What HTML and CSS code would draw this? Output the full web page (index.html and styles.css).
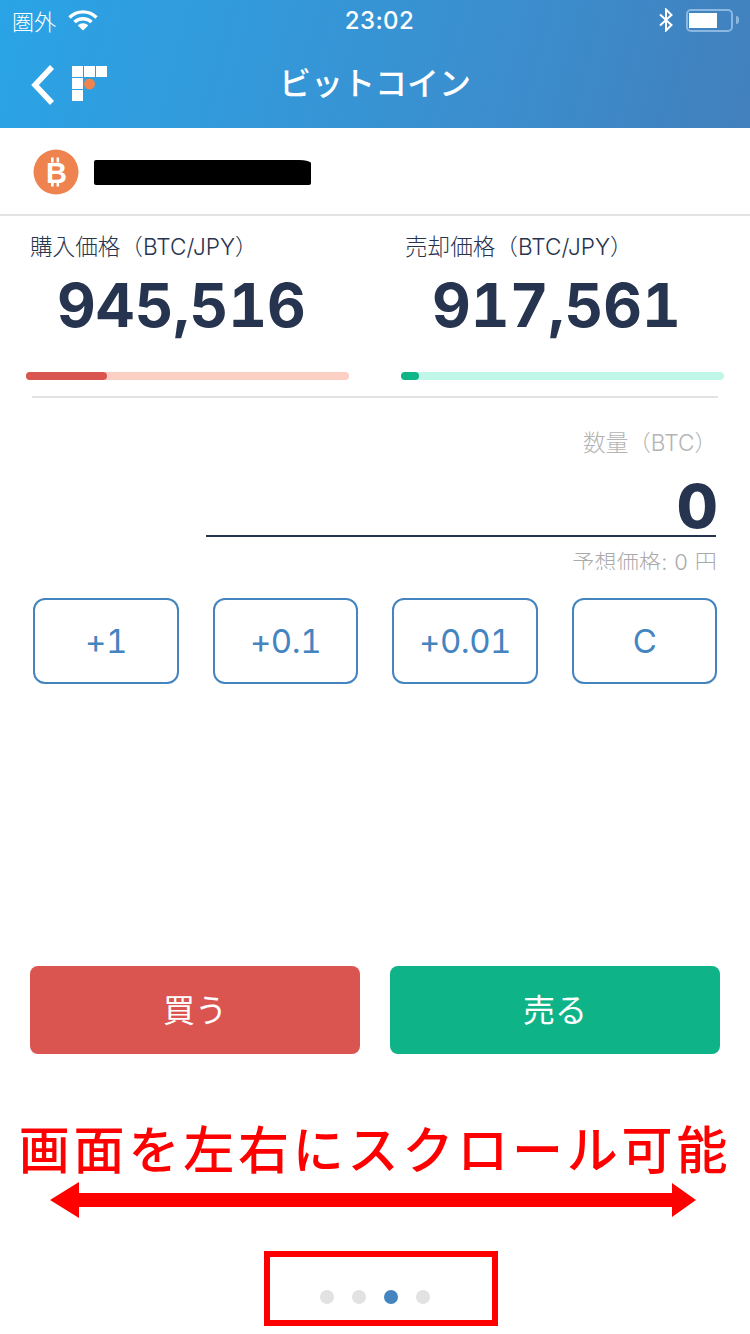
FILE: index.html
```html
<!DOCTYPE html>
<html lang="ja">
<head>
    <meta charset="UTF-8">
    <meta name="viewport" content="width=device-width, initial-scale=1.0">
    <title>ビットコイン</title>
    <link rel="stylesheet" href="styles.css">
</head>
<body>
    <header class="header">
        <div class="status">
            <div class="status_left">
                <span class="carrier">圏外</span>
                <svg class="wifi" width="30" height="22" viewBox="0 0 30 22">
                    <path d="M1.5 8.5C9 1 21 1 28.5 8.5" fill="none" stroke="#fff" stroke-width="3.4"/>
                    <path d="M6.5 13C11 8.6 19 8.6 23.5 13" fill="none" stroke="#fff" stroke-width="3.4"/>
                    <path d="M9.8 16.4C12.6 13.6 17.4 13.6 20.2 16.4L15 21.5Z" fill="#fff"/>
                </svg>
            </div>
            <span class="time">23:02</span>
            <div class="status_right">
                <svg class="bt" width="16" height="24" viewBox="0 0 16 24">
                    <path d="M2 6.5L13.5 17L8 22.5V1.5L13.5 7L2 17.5" fill="none" stroke="#fff" stroke-width="2"/>
                </svg>
                <div class="battery"><div class="battery_fill"></div></div>
                <div class="battery_tip"></div>
            </div>
        </div>
        <nav class="nav">
            <div class="nav_left">
                <svg width="26" height="42" viewBox="0 0 26 42">
                    <path d="M22 3L5 21L22 39" fill="none" stroke="#fff" stroke-width="5.5"/>
                </svg>
                <svg class="logo" width="36" height="36" viewBox="0 0 36 36">
                    <rect x="0" y="0" width="11" height="11" fill="#fff"/>
                    <rect x="12" y="0" width="11" height="11" fill="#fff"/>
                    <rect x="24" y="0" width="11" height="11" fill="#fff"/>
                    <rect x="0" y="12" width="11" height="11" fill="#fff"/>
                    <rect x="0" y="24" width="11" height="11" fill="#fff"/>
                    <circle cx="17.5" cy="18" r="5.5" fill="#ef8350"/>
                </svg>
            </div>
            <h1 class="title">ビットコイン</h1>
        </nav>
    </header>

    <section class="coin_row">
        <svg width="46" height="46" viewBox="0 0 46 46">
            <circle cx="23" cy="23" r="22.5" fill="#ef8350"/>
            <rect x="18" y="8.5" width="2.6" height="5" fill="#fff"/>
            <rect x="23.5" y="8.5" width="2.6" height="5" fill="#fff"/>
            <rect x="18" y="32.5" width="2.6" height="5" fill="#fff"/>
            <rect x="23.5" y="32.5" width="2.6" height="5" fill="#fff"/>
            <text x="23.5" y="33.5" text-anchor="middle" class="coin_b">B</text>
        </svg>
        <div class="redact"></div>
    </section>

    <section class="prices">
        <div class="price">
            <p class="price_label">購入価格（BTC/JPY）</p>
            <p class="price_num">945,516</p>
            <div class="bar bar_buy"><div class="bar_fill"></div></div>
        </div>
        <div class="price">
            <p class="price_label">売却価格（BTC/JPY）</p>
            <p class="price_num">917,561</p>
            <div class="bar bar_sell"><div class="bar_fill"></div></div>
        </div>
    </section>

    <section class="order">
        <p class="qty_label">数量（BTC）</p>
        <div class="qty_input">0</div>
        <div class="estimate"><span>予想価格: 0 円</span></div>
        <div class="steps">
            <button class="step">+1</button>
            <button class="step">+0.1</button>
            <button class="step">+0.01</button>
            <button class="step">C</button>
        </div>
    </section>

    <section class="actions">
        <button class="action action_buy">買う</button>
        <button class="action action_sell">売る</button>
    </section>

    <p class="note">画面を左右にスクロール可能</p>
    <svg class="arrow" width="646" height="36" viewBox="0 0 646 36">
        <path d="M0 18L29 0V11H622V1L646 18L622 35V25H29V36Z" fill="#f00"/>
    </svg>
    <div class="pager">
        <span class="dot"></span>
        <span class="dot"></span>
        <span class="dot dot_on"></span>
        <span class="dot"></span>
    </div>
</body>
</html>
```

FILE: styles.css
```css
*{
    margin: 0px;
    padding: 0px;
    box-sizing: border-box;
}
body{
    width: 750px;
    height: 1334px;
    overflow: hidden;
    background-color: #fff;
    font-family: "Inter", "Noto Sans CJK JP", sans-serif;
}
.header{
    height: 128px;
    background: linear-gradient(105deg, #2aa4e6 0%, #3a90d0 60%, #4280bd 100%);
    color: #fff;
}
.status{
    height: 40px;
    padding: 0 11px 0 12px;
    display: grid;
    grid-template-columns: 1fr auto 1fr;
    align-items: center;
}
.status_left{
    display: flex;
    align-items: center;
    gap: 12px;
}
.carrier{
    font-family: "Noto Sans CJK JP", sans-serif;
    font-weight: 300;
    font-size: 22px;
}
.time{
    margin-left: 8px;
    font-family: "Inter", sans-serif;
    font-weight: 500;
    font-size: 24px;
    letter-spacing: 0.4px;
}
.status_right{
    display: flex;
    align-items: center;
    justify-content: flex-end;
}
.bt{
    margin-right: 12px;
}
.battery{
    width: 47px;
    height: 23px;
    padding: 2px 1px;
    border: 2px solid #8ab8e0;
    border-radius: 5px;
}
.battery_fill{
    width: 28px;
    height: 100%;
    background-color: #fff;
}
.battery_tip{
    width: 3px;
    height: 8px;
    margin-left: 3px;
    background-color: #8ab8e0;
    border-radius: 0 3px 3px 0;
}
.nav{
    height: 88px;
    position: relative;
    display: flex;
    align-items: center;
    justify-content: center;
}
.nav_left{
    position: absolute;
    left: 30px;
    top: 24px;
    display: flex;
    gap: 16px;
}
.logo{
    margin-top: 2px;
}
.title{
    font-family: "Noto Sans CJK JP", sans-serif;
    font-weight: 500;
    font-size: 32px;
    line-height: 88px;
    margin-top: -6px;
}
.coin_row{
    height: 88px;
    padding: 21px 0 0 33px;
    display: flex;
    gap: 15px;
    align-items: flex-start;
    border-bottom: 2px solid #e3e3e3;
}
.coin_b{
    font-family: "Liberation Sans", sans-serif;
    font-weight: 700;
    font-size: 29px;
    fill: #fff;
}
.redact{
    width: 217px;
    height: 25px;
    margin-top: 11px;
    background-color: #000;
    border-radius: 2px 12px 2px 2px / 2px 3px 2px 2px;
}
.prices{
    height: 182px;
    margin: 0 26px;
    display: grid;
    grid-template-columns: 323px 323px;
    column-gap: 52px;
    border-bottom: 2px solid #fff;
    position: relative;
}
.prices::after{
    content: "";
    position: absolute;
    left: 6px;
    width: 686px;
    bottom: -2px;
    height: 2px;
    background-color: #e3e3e3;
}
.price_label{
    font-family: "Inter", "Noto Sans CJK JP", sans-serif;
    font-weight: 300;
    font-size: 22.6px;
    line-height: 32px;
    padding: 15px 0 0 4px;
    color: #27344f;
}
.price_num{
    font-family: "Inter", sans-serif;
    font-weight: 700;
    font-size: 60px;
    font-variant-numeric: tabular-nums;
    line-height: 76px;
    margin-top: 4px;
    padding-right: 12px;
    text-align: center;
    color: #27344f;
    height: 76px;
}
.bar{
    height: 8px;
    margin-top: 29px;
    border-radius: 4px;
}
.bar_fill{
    height: 100%;
    border-radius: 4px;
}
.bar_buy{
    background-color: #fccfc3;
}
.bar_buy .bar_fill{
    width: 81px;
    background-color: #db5550;
}
.bar_sell{
    background-color: #c0f7e8;
}
.bar_sell .bar_fill{
    width: 18px;
    background-color: #0fb488;
}
.order{
    padding: 0 33px;
}
.qty_label{
    font-family: "Inter", "Noto Sans CJK JP", sans-serif;
    font-weight: 300;
    font-size: 22.6px;
    line-height: 32px;
    margin-top: 29px;
    text-align: right;
    color: #b4b4b4;
}
.qty_input{
    width: 510px;
    height: 78px;
    margin-left: 173px;
    border-bottom: 2px solid #27344f;
    font-weight: 800;
    font-size: 60px;
    line-height: 94px;
    letter-spacing: -2px;
    text-align: right;
    color: #27344f;
}
.estimate{
    height: 33px;
    overflow: hidden;
    text-align: right;
    font-family: "Inter", "Noto Sans CJK JP", sans-serif;
    font-weight: 300;
    font-size: 22px;
    line-height: 50px;
    color: #aaa;
    letter-spacing: 0.3px;
}
.steps{
    margin-top: 28px;
    display: flex;
    gap: 34px;
}
.step{
    width: 146px;
    height: 86px;
    border: 2px solid #4484bf;
    border-radius: 12px;
    background-color: #fff;
    color: #4484bf;
    font-family: "Inter", sans-serif;
    font-size: 33px;
    font-variant-numeric: tabular-nums;
    letter-spacing: -0.5px;
}
.step:nth-child(even){
    width: 145px;
}
.actions{
    margin: 282px 30px 0;
    display: flex;
    justify-content: space-between;
}
.action{
    width: 330px;
    height: 88px;
    padding-bottom: 4px;
    border: none;
    border-radius: 8px;
    color: #fff;
    font-family: "Noto Sans CJK JP", sans-serif;
    font-weight: 400;
    font-size: 32px;
}
.action_buy{
    background-color: #db5550;
}
.action_sell{
    background-color: #0eb488;
}
.note{
    margin-top: 60px;
    height: 68px;
    text-align: center;
    font-family: "Noto Sans CJK JP", sans-serif;
    font-weight: 500;
    font-size: 51px;
    line-height: 66px;
    letter-spacing: 3.8px;
    white-space: nowrap;
    color: #f00;
}
.arrow{
    display: block;
    margin-left: 50px;
}
.pager{
    width: 234px;
    height: 75px;
    margin: 33px 0 0 264px;
    padding: 33px 12px 0 0;
    border: 6px solid #f00;
    display: flex;
    justify-content: center;
    gap: 18px;
}
.dot{
    width: 14px;
    height: 14px;
    border-radius: 50%;
    background-color: #e2e2e2;
}
.dot_on{
    background-color: #4484bf;
}
```
